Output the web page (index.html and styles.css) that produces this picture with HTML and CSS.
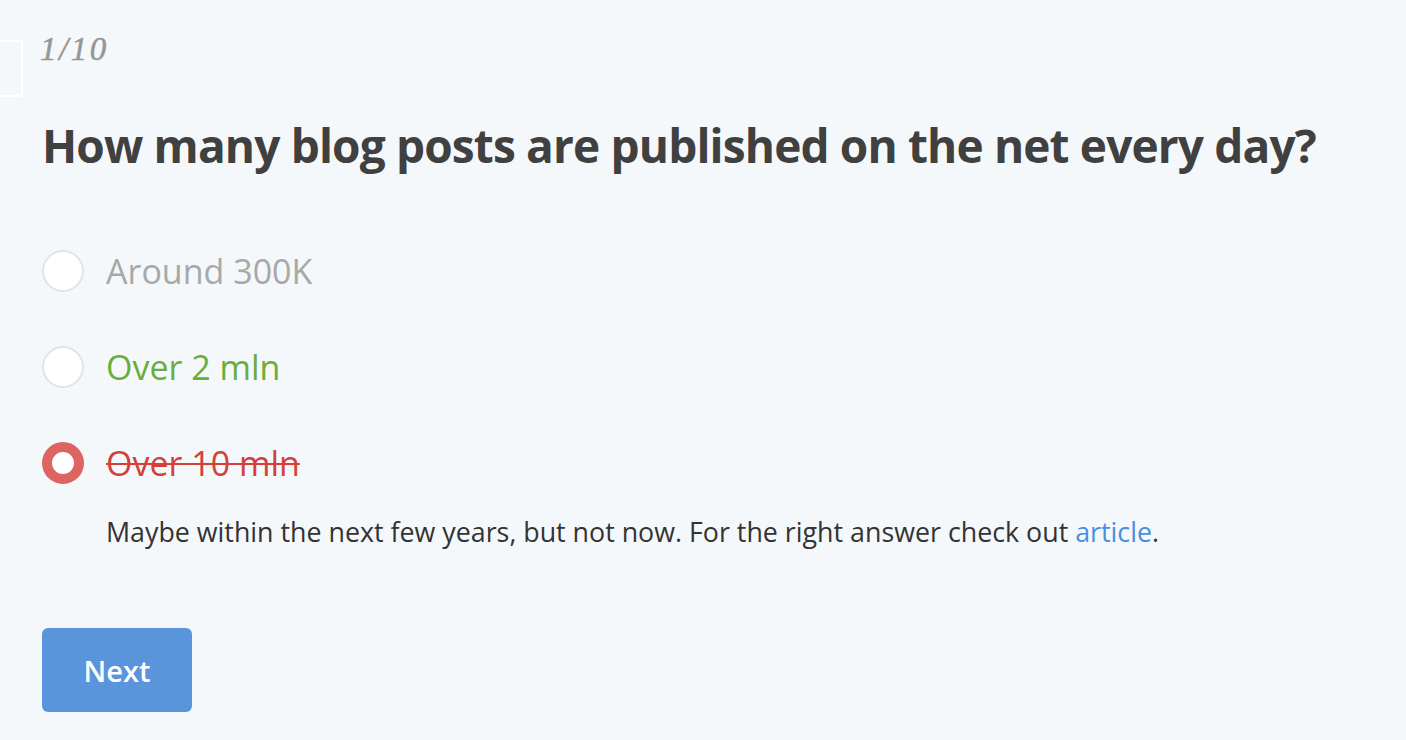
FILE: index.html
```html
<!DOCTYPE html>
<html>
<head>
<meta charset="utf-8">
<link rel="stylesheet" href="styles.css">
</head>
<body>
<div class="edge-box"></div>
<main class="quiz">
  <div class="counter">1/10</div>
  <h1 class="question">How many blog posts are published on the net every day?</h1>
  <ul class="options">
    <li class="option muted"><span class="radio"></span><span class="label">Around 300K</span></li>
    <li class="option correct"><span class="radio"></span><span class="label">Over 2 mln</span></li>
    <li class="option wrong"><span class="radio checked"></span><span class="label">Over 10 mln</span></li>
  </ul>
  <p class="explain">Maybe within the next few years, but not now. For the right answer check out <a href="#">article</a>.</p>
  <button class="next">Next</button>
</main>
</body>
</html>
```
FILE: styles.css
```css
html, body {
  margin: 0;
  padding: 0;
  background: #f4f8fb;
  height: 100%;
  overflow: hidden;
}
body {
  font-family: "Open Sans", "Noto Sans", sans-serif;
  position: relative;
}
.edge-box {
  position: absolute;
  left: -10px;
  top: 40px;
  width: 29px;
  height: 53px;
  border: 2px solid #ffffff;
  border-radius: 4px;
}
.quiz {
  padding: 30px 40px 0;
}
.counter {
  font-family: "Liberation Serif", serif;
  font-style: italic;
  font-size: 33px;
  color: #969696;
  line-height: 38px;
  letter-spacing: 2.5px;
  -webkit-text-stroke: 0.5px #969696;
}
.question {
  margin: 49px 0 0 2px;
  font-size: 46px;
  font-weight: 700;
  color: #404040;
  line-height: 56px;
  letter-spacing: -0.85px;
}
.options {
  list-style: none;
  margin: 77px 0 0 2px;
  padding: 0;
  display: flex;
  flex-direction: column;
  gap: 54px;
}
.option {
  display: flex;
  align-items: center;
  gap: 22px;
  height: 42px;
  font-size: 34px;
}
.radio {
  width: 38px;
  height: 38px;
  border: 2px solid #dfe4e8;
  border-radius: 50%;
  background: #fff;
  flex: none;
}
.radio.checked {
  width: 22px;
  height: 22px;
  border: 10px solid #dd6561;
}
.muted .label { color: #a8a8a8; }
.correct .label { color: #6aad3b; }
.wrong .label {
  color: #d43f3a;
  text-decoration: line-through;
  text-decoration-thickness: 2px;
}
.explain {
  margin: 31px 0 0 66px;
  font-size: 26.8px;
  color: #333;
  line-height: 34px;
}
.explain a {
  color: #4a8fdf;
  text-decoration: none;
}
.next {
  margin: 79px 0 0 2px;
  width: 150px;
  height: 84px;
  border: none;
  border-radius: 6px;
  background: #5a95dc;
  color: #fff;
  font-family: "Open Sans", "Noto Sans", sans-serif;
  font-size: 29px;
  font-weight: 600;
}
```
